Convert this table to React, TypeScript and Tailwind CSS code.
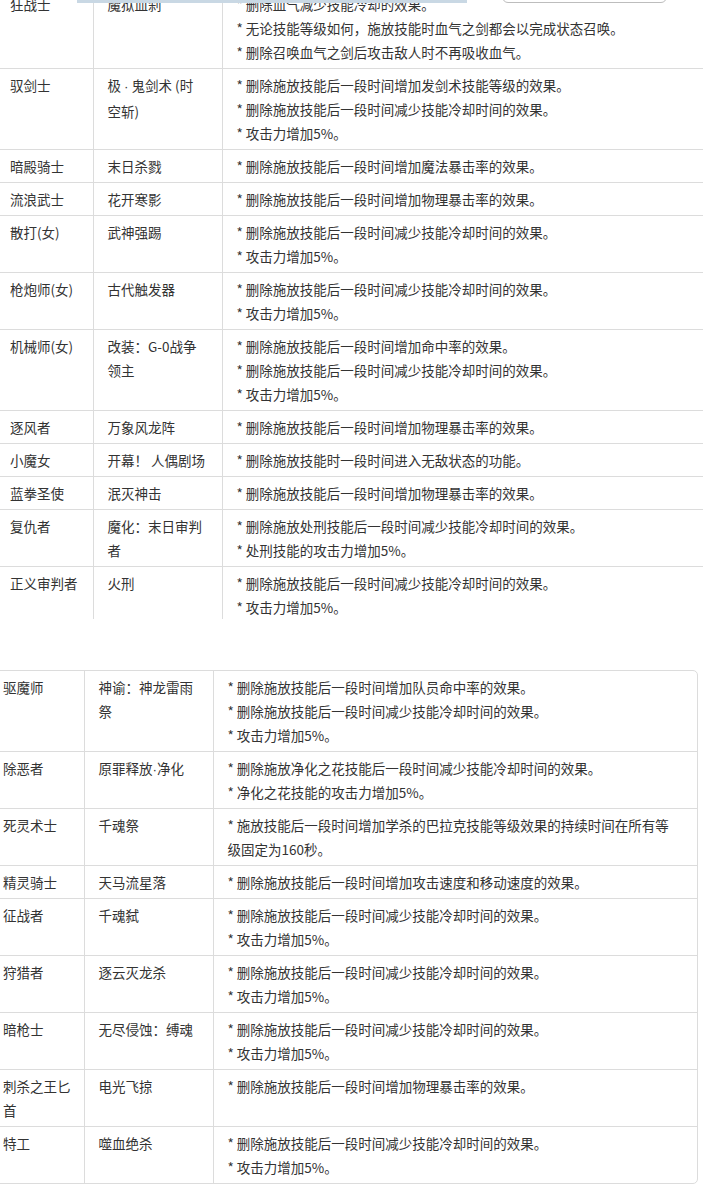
import type { ReactNode } from 'react'

type Row = { name: string; skill: string; notes: string[] }

const upperRows: Row[] = [
  {
    name: '狂战士',
    skill: '魔狱血刹',
    notes: [
      '* 删除血气减少技能冷却的效果。',
      '* 无论技能等级如何，施放技能时血气之剑都会以完成状态召唤。',
      '* 删除召唤血气之剑后攻击敌人时不再吸收血气。',
    ],
  },
  {
    name: '驭剑士',
    skill: '极 · 鬼剑术 (时\n空斩)',
    notes: [
      '* 删除施放技能后一段时间增加发剑术技能等级的效果。',
      '* 删除施放技能后一段时间减少技能冷却时间的效果。',
      '* 攻击力增加5%。',
    ],
  },
  { name: '暗殿骑士', skill: '末日杀戮', notes: ['* 删除施放技能后一段时间增加魔法暴击率的效果。'] },
  { name: '流浪武士', skill: '花开寒影', notes: ['* 删除施放技能后一段时间增加物理暴击率的效果。'] },
  {
    name: '散打(女)',
    skill: '武神强踢',
    notes: ['* 删除施放技能后一段时间减少技能冷却时间的效果。', '* 攻击力增加5%。'],
  },
  {
    name: '枪炮师(女)',
    skill: '古代触发器',
    notes: ['* 删除施放技能后一段时间减少技能冷却时间的效果。', '* 攻击力增加5%。'],
  },
  {
    name: '机械师(女)',
    skill: '改装：G-0战争\n领主',
    notes: [
      '* 删除施放技能后一段时间增加命中率的效果。',
      '* 删除施放技能后一段时间减少技能冷却时间的效果。',
      '* 攻击力增加5%。',
    ],
  },
  { name: '逐风者', skill: '万象风龙阵', notes: ['* 删除施放技能后一段时间增加物理暴击率的效果。'] },
  { name: '小魔女', skill: '开幕！ 人偶剧场', notes: ['* 删除施放技能时一段时间进入无敌状态的功能。'] },
  { name: '蓝拳圣使', skill: '泯灭神击', notes: ['* 删除施放技能后一段时间增加物理暴击率的效果。'] },
  {
    name: '复仇者',
    skill: '魔化：末日审判\n者',
    notes: ['* 删除施放处刑技能后一段时间减少技能冷却时间的效果。', '* 处刑技能的攻击力增加5%。'],
  },
  {
    name: '正义审判者',
    skill: '火刑',
    notes: ['* 删除施放技能后一段时间减少技能冷却时间的效果。', '* 攻击力增加5%。'],
  },
]

const lowerRows: Row[] = [
  {
    name: '驱魔师',
    skill: '神谕：神龙雷雨\n祭',
    notes: [
      '* 删除施放技能后一段时间增加队员命中率的效果。',
      '* 删除施放技能后一段时间减少技能冷却时间的效果。',
      '* 攻击力增加5%。',
    ],
  },
  {
    name: '除恶者',
    skill: '原罪释放·净化',
    notes: ['* 删除施放净化之花技能后一段时间减少技能冷却时间的效果。', '* 净化之花技能的攻击力增加5%。'],
  },
  {
    name: '死灵术士',
    skill: '千魂祭',
    notes: ['* 施放技能后一段时间增加学杀的巴拉克技能等级效果的持续时间在所有等\n级固定为160秒。'],
  },
  { name: '精灵骑士', skill: '天马流星落', notes: ['* 删除施放技能后一段时间增加攻击速度和移动速度的效果。'] },
  {
    name: '征战者',
    skill: '千魂弑',
    notes: ['* 删除施放技能后一段时间减少技能冷却时间的效果。', '* 攻击力增加5%。'],
  },
  {
    name: '狩猎者',
    skill: '逐云灭龙杀',
    notes: ['* 删除施放技能后一段时间减少技能冷却时间的效果。', '* 攻击力增加5%。'],
  },
  {
    name: '暗枪士',
    skill: '无尽侵蚀：缚魂',
    notes: ['* 删除施放技能后一段时间减少技能冷却时间的效果。', '* 攻击力增加5%。'],
  },
  { name: '刺杀之王匕\n首', skill: '电光飞掠', notes: ['* 删除施放技能后一段时间增加物理暴击率的效果。'] },
  {
    name: '特工',
    skill: '噬血绝杀',
    notes: ['* 删除施放技能后一段时间减少技能冷却时间的效果。', '* 攻击力增加5%。'],
  },
]

const cell = 'align-top pl-[14px] pr-2 py-[4px] whitespace-pre-line'

/** The CJK font draws "·" full width; the source shows the narrow Latin dot. */
function withDots(text: string): ReactNode {
  const parts = text.split('·')
  return parts.map((p, i) => (
    <span key={i}>
      {i > 0 && <span className="font-['Liberation_Sans']">·</span>}
      {p}
    </span>
  ))
}

function Rows({ rows, lastOpen }: { rows: Row[]; lastOpen?: boolean }) {
  return (
    <tbody>
      {rows.map((r, i) => {
        const last = i === rows.length - 1
        const edge = last ? (lastOpen ? 'pb-0' : '') : 'border-b border-[#dcdcdc]'
        return (
          <tr key={r.name}>
            <td className={`${cell} ${edge}`}>{r.name}</td>
            <td className={`${cell} ${edge} border-l border-[#dcdcdc]`}>{withDots(r.skill)}</td>
            <td className={`${cell} ${edge} border-l border-[#dcdcdc]`}>
              {r.notes.map((n) => (
                <div key={n}>{n}</div>
              ))}
            </td>
          </tr>
        )
      })}
    </tbody>
  )
}

export default function App() {
  return (
    <div
      className="relative w-[703px] h-[1188px] overflow-hidden bg-white text-[#333] text-[13.5px] leading-[24px]"
      style={{ fontFamily: '"Noto Sans CJK SC", "Microsoft YaHei", sans-serif' }}
    >
      <table className="ml-[-4px] mt-[-12px] w-[760px] table-fixed border-collapse">
        <colgroup>
          <col className="w-[97px]" />
          <col className="w-[129px]" />
          <col />
        </colgroup>
        <Rows rows={upperRows} lastOpen />
      </table>

      <div className="ml-[-12px] mt-[51px] w-[710px] overflow-hidden rounded-[5px] border border-[#dcdcdc]">
        <table className="w-full table-fixed border-collapse">
          <colgroup>
            <col className="w-[95px]" />
            <col className="w-[129px]" />
            <col />
          </colgroup>
          <Rows rows={lowerRows} />
        </table>
      </div>

      {/* bits of a sticky header poking in over the first row */}
      <div className="absolute left-[77px] top-0 h-[3px] w-[390px] bg-[#c9d8e4]" />
      <div className="absolute left-[502px] top-[-12px] h-[15px] w-[165px] rounded-[6px] border border-[#bdbdbd] bg-white" />
    </div>
  )
}
